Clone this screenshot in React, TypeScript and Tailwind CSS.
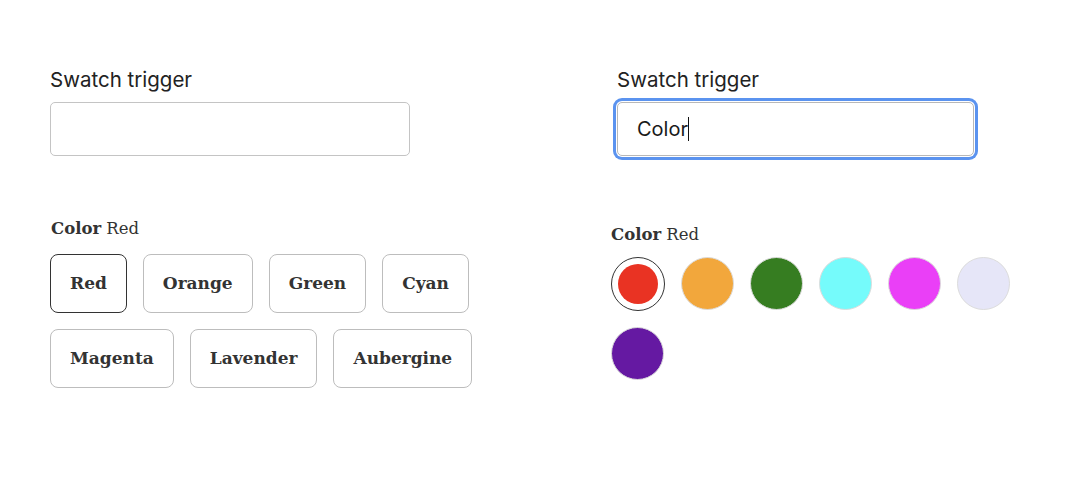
import React, { useState } from 'react';

const options = ['Red', 'Orange', 'Green', 'Cyan', 'Magenta', 'Lavender', 'Aubergine'];

const swatches = [
  { name: 'Red', hex: '#e93323' },
  { name: 'Orange', hex: '#f2a73c' },
  { name: 'Green', hex: '#367d21' },
  { name: 'Cyan', hex: '#75fbfb' },
  { name: 'Magenta', hex: '#ea3ff7' },
  { name: 'Lavender', hex: '#e6e6f8' },
  { name: 'Aubergine', hex: '#6519a2' },
];

const sans = { fontFamily: 'Inter, "Noto Sans", sans-serif' };
const serif = { fontFamily: '"DejaVu Serif", "Liberation Serif", serif' };

function ColorLabel({ value }: { value: string }) {
  return (
    <div className="text-[16.5px] leading-[24px] text-[#333]" style={serif}>
      <span className="font-bold">Color</span> {value}
    </div>
  );
}

export default function App() {
  const [selected, setSelected] = useState('Red');
  const [swatch, setSwatch] = useState('Red');

  return (
    <div className="w-[1077px] h-[503px] bg-white flex pt-[68px]">
      {/* left: text buttons */}
      <div className="w-[611px] pl-[50px] flex flex-col">
        <label className="text-[20.5px] leading-[24px] text-[#222] mb-[10px]" style={sans}>Swatch trigger</label>
        <div className="w-[360px] h-[54px] border-[1.5px] border-[#c4c4c4] rounded-[5px] bg-white" />

        <div className="mt-[61px]">
          <div className="pl-[1px]">
            <ColorLabel value={selected} />
          </div>
          <div className="mt-[13px] w-[440px] flex flex-wrap gap-x-[16px] gap-y-[16px]">
            {options.map(o => (
              <button
                key={o}
                onClick={() => setSelected(o)}
                className={`h-[59px] px-[19px] rounded-[8px] bg-white text-[17px] font-bold text-[#333] ${o === selected ? 'border-[1.5px] border-[#333]' : 'border-[1.5px] border-[#bdbdbd]'}`}
                style={serif}
              >
                {o}
              </button>
            ))}
          </div>
        </div>
      </div>

      {/* right: color swatches */}
      <div className="flex-1 flex flex-col">
        <div className="pl-[6px] flex flex-col">
          <label className="text-[20.5px] leading-[24px] text-[#222] mb-[10px]" style={sans}>Swatch trigger</label>
          <div className="w-[357px] h-[54px] border-[1.5px] border-[#b8b8b8] rounded-[5px] bg-white ring-[3px] ring-[#5b93ef] ring-offset-[1px] ring-offset-white flex items-center px-[19px]">
            <span className="text-[20px] text-[#1a1a1a]" style={sans}>Color</span>
            <span className="w-[1.5px] h-[24px] bg-[#111]" />
          </div>
        </div>

        <div className="mt-[67px]">
          <ColorLabel value={swatch} />
          <div className="mt-[10px] w-[420px] flex flex-wrap gap-x-[16px] gap-y-[16px]">
            {swatches.map(s =>
              s.name === swatch ? (
                <button
                  key={s.name}
                  onClick={() => setSwatch(s.name)}
                  className="w-[54px] h-[54px] rounded-full border-[1.5px] border-[#333] flex items-center justify-center"
                >
                  <span className="w-[40px] h-[40px] rounded-full" style={{ backgroundColor: s.hex }} />
                </button>
              ) : (
                <button
                  key={s.name}
                  onClick={() => setSwatch(s.name)}
                  className="w-[53px] h-[53px] rounded-full border border-[#dcdcdc]"
                  style={{ backgroundColor: s.hex }}
                />
              )
            )}
          </div>
        </div>
      </div>
    </div>
  );
}
